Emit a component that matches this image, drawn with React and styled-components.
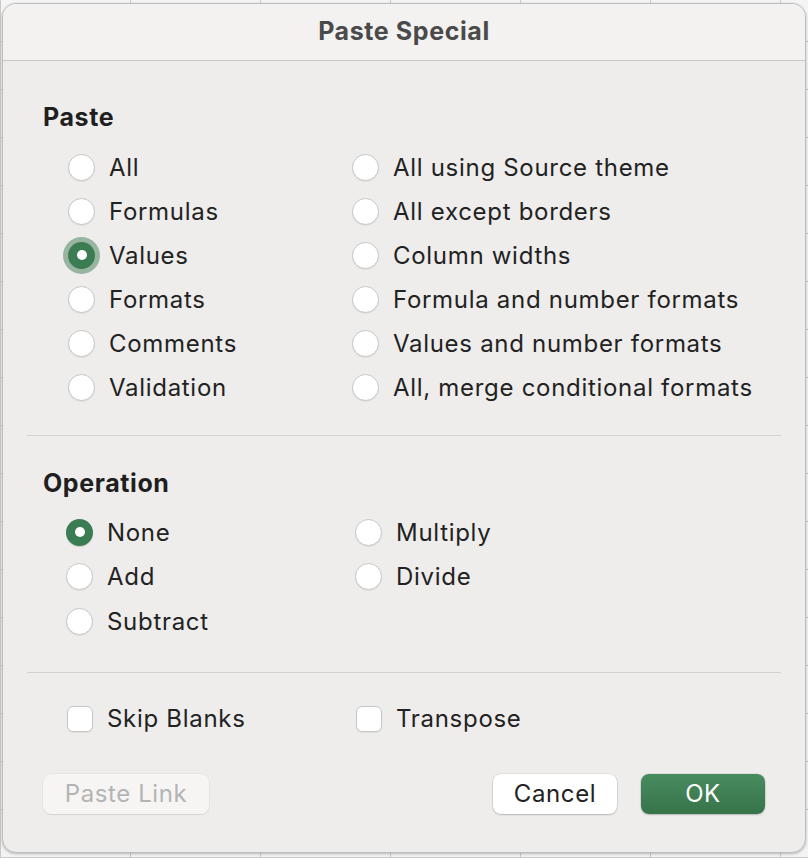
import styled, { createGlobalStyle, css } from 'styled-components';

const GlobalStyle = createGlobalStyle`
  html, body {
    margin: 0;
    padding: 0;
  }
  body {
    width: 808px;
    height: 858px;
    overflow: hidden;
    background-color: #f4f4f4;
    background-image:
      repeating-linear-gradient(0deg, #c9c9c9 0 1px, transparent 1px 48px),
      repeating-linear-gradient(90deg, #c9c9c9 0 1px, transparent 1px 130px);
    font-family: Inter, "Liberation Sans", sans-serif;
  }
`;

const Dialog = styled.div`
  margin: 3px 0 0 2px;
  width: 804px;
  height: 850px;
  box-sizing: border-box;
  display: flex;
  flex-direction: column;
  background: #eeedec;
  border: 1px solid #bdbdbd;
  border-radius: 14px;
  overflow: hidden;
  box-shadow: 0 1px 3px rgba(0, 0, 0, 0.25);
`;

const TitleBar = styled.div`
  height: 57px;
  flex: none;
  box-sizing: border-box;
  padding-bottom: 2px;
  display: flex;
  align-items: center;
  justify-content: center;
  background: #f3f2f1;
  border-bottom: 1px solid #c9c8c7;
  font-size: 25px;
  font-weight: 700;
  color: #4a4a4a;
  letter-spacing: 0.6px;
`;

const Body = styled.div`
  flex: 1;
  display: flex;
  flex-direction: column;
  padding: 42px 24px 0;
`;

const Section = styled.section`
  display: flex;
  flex-direction: column;
  padding: 0 16px;
`;

const Heading = styled.h2`
  margin: 0 0 ${(p) => p.$gap}px;
  height: 28px;
  line-height: 28px;
  font-size: 25px;
  font-weight: 700;
  color: #1f1f1f;
  letter-spacing: 0.6px;
`;

const OptionGrid = styled.div`
  display: grid;
  grid-template-columns: ${(p) => p.$split}px 1fr;
  grid-auto-flow: column;
  grid-template-rows: repeat(${(p) => p.$rows}, ${(p) => p.$rowHeight}px);
  padding-left: ${(p) => p.$indent}px;
`;

const Option = styled.label`
  display: flex;
  align-items: center;
  gap: 14px;
  font-size: 24px;
  letter-spacing: 0.7px;
  color: #222;
  white-space: nowrap;
`;

const Radio = styled.span`
  position: relative;
  flex: none;
  width: 27px;
  height: 27px;
  box-sizing: border-box;
  border-radius: 50%;
  background: #fff;
  border: 1px solid #c6c6c6;
  box-shadow: 0 1px 1px rgba(0, 0, 0, 0.06);

  ${(p) =>
    p.$checked &&
    css`
      background: #3c7c52;
      border: none;
      box-shadow: 0 1px 1px rgba(0, 0, 0, 0.15);
      &::after {
        content: '';
        position: absolute;
        left: 8.5px;
        top: 8.5px;
        width: 10px;
        height: 10px;
        border-radius: 50%;
        background: #fff;
      }
    `}

  ${(p) =>
    p.$focused &&
    css`
      box-shadow: 0 0 0 5px rgba(80, 135, 98, 0.55);
    `}
`;

const Checkbox = styled.span`
  flex: none;
  width: 26px;
  height: 26px;
  box-sizing: border-box;
  border-radius: 6px;
  background: #fff;
  border: 1px solid #c6c6c6;
  box-shadow: 0 1px 1px rgba(0, 0, 0, 0.06);
`;

const Divider = styled.hr`
  margin: ${(p) => p.$top}px 0 ${(p) => p.$bottom}px;
  border: none;
  border-top: 1px solid #d2d1d0;
  height: 0;
`;

const Footer = styled.div`
  display: flex;
  align-items: center;
  gap: 24px;
  margin-top: 33px;
  padding: 0 16px;
`;

const Button = styled.button`
  height: 40px;
  width: ${(p) => p.$w}px;
  box-sizing: border-box;
  border-radius: 8px;
  font-family: inherit;
  font-size: 24px;
  letter-spacing: 0.6px;
  border: none;
  padding: 0;
  background: #fff;
  color: #222;
  box-shadow: 0 0 0 0.5px rgba(0, 0, 0, 0.12), 0 1px 2px rgba(0, 0, 0, 0.18);

  ${(p) =>
    p.$variant === 'primary' &&
    css`
      background: linear-gradient(#488c5e, #377349);
      color: #fff;
    `}

  ${(p) =>
    p.$variant === 'disabled' &&
    css`
      background: #f6f5f4;
      color: #b4b4b4;
      box-shadow: 0 0 0 0.5px rgba(0, 0, 0, 0.06), 0 1px 1px rgba(0, 0, 0, 0.08);
    `}
`;

const Spacer = styled.div`
  flex: 1;
`;

const pasteOptions = [
  'All',
  'Formulas',
  'Values',
  'Formats',
  'Comments',
  'Validation',
  'All using Source theme',
  'All except borders',
  'Column widths',
  'Formula and number formats',
  'Values and number formats',
  'All, merge conditional formats',
];

const operationOptions = ['None', 'Add', 'Subtract', 'Multiply', 'Divide'];

export default function App() {
  return (
    <>
      <GlobalStyle />
      <Dialog>
        <TitleBar>Paste Special</TitleBar>
        <Body>
          <Section>
            <Heading $gap={14}>Paste</Heading>
            <OptionGrid $split={284} $rows={6} $rowHeight={44} $indent={25}>
              {pasteOptions.map((label) => (
                <Option key={label}>
                  <Radio $checked={label === 'Values'} $focused={label === 'Values'} />
                  {label}
                </Option>
              ))}
            </OptionGrid>
          </Section>

          <Divider $top={26} $bottom={33} />

          <Section>
            <Heading $gap={13}>Operation</Heading>
            <OptionGrid $split={289} $rows={3} $rowHeight={44.5} $indent={23}>
              {operationOptions.map((label) => (
                <Option key={label}>
                  <Radio $checked={label === 'None'} />
                  {label}
                </Option>
              ))}
            </OptionGrid>
          </Section>

          <Divider $top={28} $bottom={24} />

          <Section>
            <OptionGrid $split={289} $rows={1} $rowHeight={44} $indent={24}>
              <Option>
                <Checkbox />
                Skip Blanks
              </Option>
              <Option>
                <Checkbox />
                Transpose
              </Option>
            </OptionGrid>
          </Section>

          <Footer>
            <Button $w={166} $variant="disabled" disabled>
              Paste Link
            </Button>
            <Spacer />
            <Button $w={124}>Cancel</Button>
            <Button $w={124} $variant="primary">
              OK
            </Button>
          </Footer>
        </Body>
      </Dialog>
    </>
  );
}
